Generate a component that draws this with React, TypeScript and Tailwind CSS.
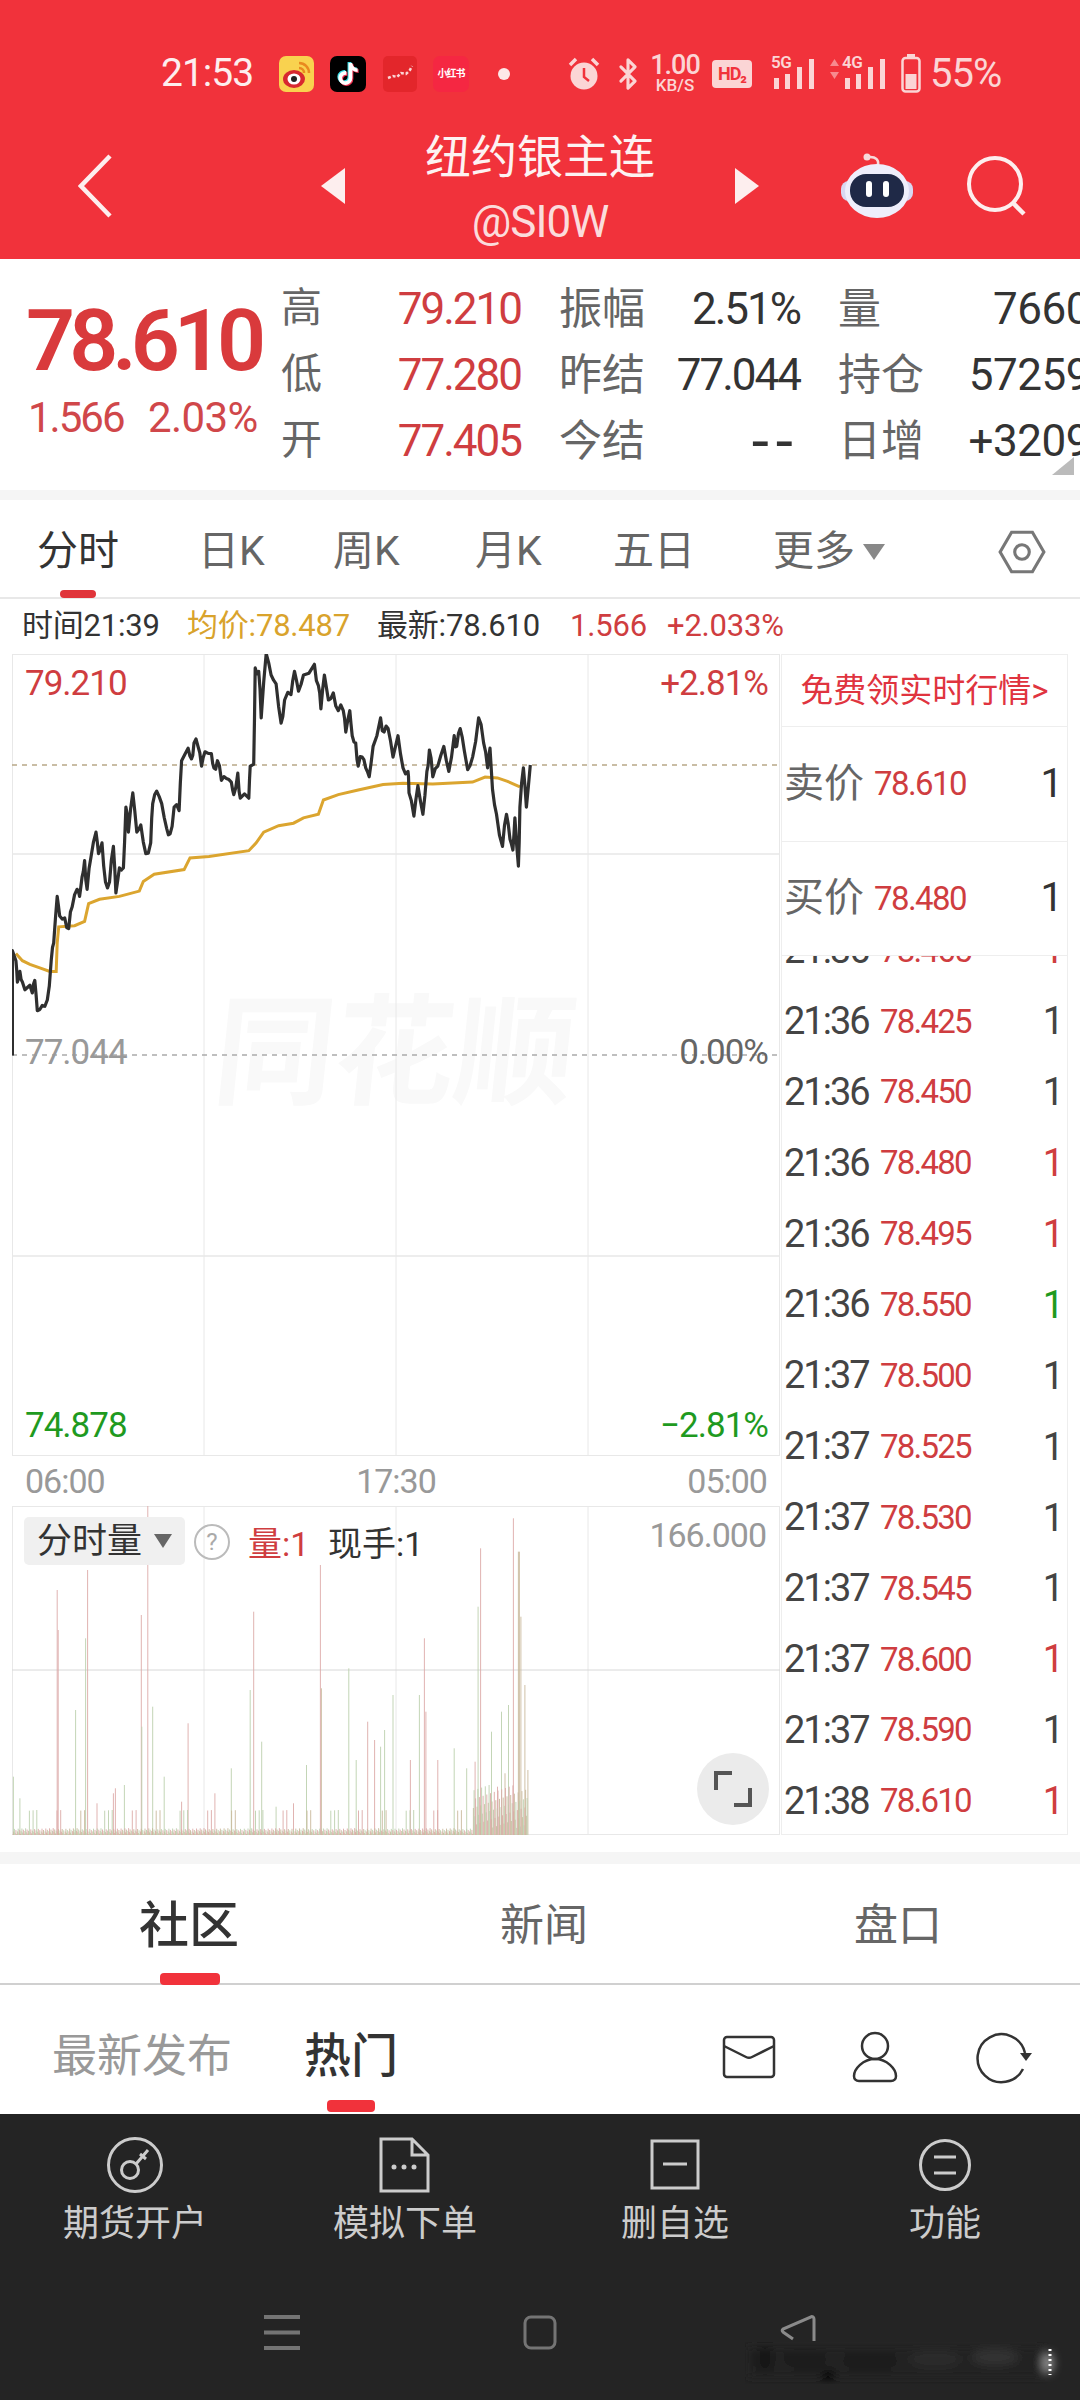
import { Bluetooth } from 'lucide-react';
import { FaTiktok } from 'react-icons/fa6';

const linePts: number[][] = [
  [25,1555],[25,1262],[32,1290],[35,1350],[40,1320],[45,1350],[55,1365],[65,1380],[70,1345],[75,1430],[85,1415],[95,1400],[103,1290],[108,1240],[115,1110],[120,1165],[130,1170],[138,1200],[145,1140],[155,1090],[160,1110],[165,1055],[170,1010],[175,1090],[183,1000],[193,930],[198,990],[205,960],[212,1070],[220,1070],[228,970],[233,1100],[240,1030],[248,1030],[253,860],[258,930],[267,820],[275,930],[283,910],[293,990],[303,960],[307,850],[315,815],[325,850],[335,920],[342,935],[350,860],[360,870],[365,730],[378,695],[385,725],[390,680],[398,690],[405,745],[412,705],[425,710],[430,750],[437,730],[445,785],[455,780],[465,790],[470,825],[478,765],[483,835],[500,835],[503,745],[510,740],[513,470],[520,480],[525,610],[535,430],[545,490],[555,515],[565,625],[572,560],[585,545],[592,480],[600,535],[610,490],[632,460],[640,520],[645,585],[652,490],[660,560],[670,540],[680,590],[690,590],[695,650],[703,590],[708,660],[715,680],[720,745],[728,720],[735,750],[742,775],[750,690],[765,610],[772,650],[780,640],[790,720],[800,660],[810,750],[820,760],[822,820],[832,885],[840,800],[850,880],[858,760],[863,700],[870,775],[880,745],[892,690],[902,760],[913,660],[918,690],[925,640],[933,700],[940,755],[950,720],[962,610],[972,680],[980,750],[985,695],[990,810],[998,880],[1010,970],[1018,880],[1025,950],[1031,980],[1035,890],[1042,1025],[1045,860],[1052,750],[1058,860],[1066,742],
];
const avgPts: number[][] = [
  [32,1270],[45,1290],[60,1300],[80,1310],[100,1320],[113,1320],[115,1240],[118,1195],[150,1192],[170,1180],[178,1130],[200,1118],[240,1110],[280,1095],[288,1068],[310,1048],[370,1035],[382,1002],[420,998],[500,982],[515,960],[530,930],[560,912],[590,905],[610,890],[640,880],[650,840],[680,825],[720,812],[770,797],[810,793],[870,795],[950,790],[975,776],[1000,778],[1020,788],[1045,803],
];
const toChart = (p: number[][]) => p.map(([x, y]) => `${(x / 2.01 - 12).toFixed(1)},${(y / 2.8 - 154).toFixed(1)}`).join(' ');

// the traced points are too smooth, so add a little tick noise between them
const noisyLine = linePts.flatMap(([x, y], i) => {
  const next = linePts[i + 1];
  if (!next || i < 2) return [[x, y]];
  const wob = ((i * 37) % 17) - 8;
  return [[x, y], [(x + next[0]) / 2, (y + next[1]) / 2 + wob * 2]];
});

const RED = '#dcaaa8';
const GREEN = '#bcd0ae';
const TAN = '#c9b99c';
const volBars: [number, number, string][] = [
  [115,450,RED],[117,570,RED],[176,390,RED],[172,595,GREEN],[152,810,GREEN],[284,525,RED],[297,195,RED],[285,860,GREEN],[307,800,GREEN],[378,850,RED],[510,515,RED],[503,750,GREEN],[526,905,GREEN],[644,375,RED],[646,745,TAN],[701,685,GREEN],[739,845,RED],[753,900,RED],[765,920,GREEN],[773,870,GREEN],[790,765,GREEN],[843,765,GREEN],[853,595,RED],[856,815,RED],[913,925,GREEN],[961,500,GREEN],[966,325,RED],[988,875,GREEN],[1008,815,GREEN],[1022,795,GREEN],[1032,235,RED],[1042,335,TAN],[1044,335,TAN],[1047,530,TAN],[1055,735,TAN],[1061,990,TAN],[27,1010,GREEN],[40,1075,GREEN],[465,985,GREEN],[616,975,GREEN],[716,960,GREEN],[825,960,RED],[880,960,RED],[938,985,GREEN],[232,1045,RED],[250,1035,GREEN],[195,1090,RED],[330,1010,GREEN],[432,1060,RED],[555,1100,GREEN],[590,1090,RED],[228,1060,RED],[365,1085,RED],[1015,1000,TAN],[1000,1040,RED],[955,965,RED],
];
// small bars along the floor of the volume chart
for (let i = 0; i < 690; i++) {
  const x = 26 + i * 1.5;
  const r = (i * 7919) % 101;
  const h = x > 950 ? 20 + r * 1.3 : r > 93 ? 40 + r * 0.35 : 2 + r * 0.2;
  volBars.push([x, 1185 - h, r % 3 === 0 ? RED : r % 3 === 1 ? GREEN : TAN]);
}

const statRows = [
  ['高', '79.210', '振幅', '2.51%', '量', '7660'],
  ['低', '77.280', '昨结', '77.044', '持仓', '57259'],
  ['开', '77.405', '今结', '--', '日增', '+3209'],
];

const ticks: [string, string, string][] = [
  ['21:36', '78.425', 'd'],
  ['21:36', '78.450', 'd'],
  ['21:36', '78.480', 'r'],
  ['21:36', '78.495', 'r'],
  ['21:36', '78.550', 'g'],
  ['21:37', '78.500', 'd'],
  ['21:37', '78.525', 'd'],
  ['21:37', '78.530', 'd'],
  ['21:37', '78.545', 'd'],
  ['21:37', '78.600', 'r'],
  ['21:37', '78.590', 'd'],
  ['21:38', '78.610', 'r'],
];

function Signal({ label }: { label: string }) {
  return (
    <div className="relative h-[30px] w-[47px]">
      <span className="absolute left-0 top-[-5px] text-[17px] font-semibold leading-[17px] tracking-[-0.5px] text-[#fbd5d5]">{label}</span>
      <svg width="47" height="30" viewBox="0 0 47 30" className="absolute left-0 top-0">
        <rect x="3" y="19" width="5" height="11" fill="#fbd5d5" />
        <rect x="14" y="15" width="5" height="15" fill="#fbd5d5" />
        <rect x="26" y="8" width="5" height="22" fill="#fbd5d5" />
        <rect x="38" y="0" width="5" height="30" fill="#fbd5d5" />
      </svg>
    </div>
  );
}

function StatusBar() {
  return (
    <div className="mt-[55px] flex h-[37px] items-center pl-[161px]">
      <span className="w-[118px] text-[39px] leading-none tracking-[-1px] text-[#fdeeee]">21:53</span>
      <svg width="35" height="36" viewBox="0 0 35 36">
        <rect width="35" height="36" rx="7" fill="#f9d24f" />
        <ellipse cx="15" cy="23" rx="11" ry="9" fill="#d8282f" />
        <ellipse cx="15" cy="23" rx="6.5" ry="5.5" fill="#fff" />
        <circle cx="15" cy="23" r="3" fill="#222" />
        <path d="M20 7a10 10 0 0 1 10 10M20 12a5 5 0 0 1 5 5" stroke="#e98a20" strokeWidth="2.5" fill="none" />
      </svg>
      <div className="relative ml-[16px] flex h-[36px] w-[36px] items-center justify-center rounded-[7px] bg-black">
        <FaTiktok className="absolute ml-[-2px] mt-[-2px] text-[22px] text-[#3fe0e8]" />
        <FaTiktok className="absolute ml-[2px] mt-[2px] text-[22px] text-[#f0304f]" />
        <FaTiktok className="absolute text-[22px] text-white" />
      </div>
      <svg width="34" height="36" viewBox="0 0 34 36" className="ml-[17px]">
        <rect width="34" height="36" rx="5" fill="#e3262b" />
        <path d="M5 22l5-2 4 1 4-4 5 1 4-4 2-4" stroke="#fbd5d5" strokeWidth="2.5" fill="none" strokeDasharray="3 2" />
      </svg>
      <div className="ml-[16px] flex h-[36px] w-[36px] items-center justify-center rounded-[7px] bg-[#f52742] text-[10px] font-bold tracking-[-1px] text-white">小红书</div>
      <div className="ml-[29px] h-[12px] w-[12px] rounded-full bg-[#fde8e8]" />
      <svg width="32" height="34" viewBox="0 0 32 34" className="ml-[58px]">
        <circle cx="16" cy="19" r="13.5" fill="#fbd5d5" />
        <path d="M16 11v9l5 4" stroke="#f1323b" strokeWidth="2.5" fill="none" />
        <path d="M2 8l6-6M30 8l-6-6" stroke="#fbd5d5" strokeWidth="3.5" />
      </svg>
      <Bluetooth size={34} strokeWidth={2.2} className="ml-[11px] text-[#fbd5d5]" />
      <div className="ml-[4px] flex w-[52px] flex-col items-center text-[#fbd5d5]">
        <span className="text-[27px] font-medium leading-[23px] tracking-[-1px]">1.00</span>
        <span className="text-[17px] font-medium leading-[16px]">KB/S</span>
      </div>
      <div className="ml-[11px] flex h-[28px] w-[40px] items-center justify-center rounded-[4px] bg-[#fbd5d5] text-[18px] font-bold leading-none tracking-[-1px] text-[#f1323b]">HD₂</div>
      <div className="ml-[19px]"><Signal label="5G" /></div>
      <svg width="9" height="20" viewBox="0 0 9 20" className="mb-[10px] ml-[12px]">
        <path d="M4.5 0L9 7H0zM4.5 20L0 13h9z" fill="#f78a8f" />
      </svg>
      <div className="ml-[3px]"><Signal label="4G" /></div>
      <svg width="20" height="39" viewBox="0 0 20 39" className="ml-[12px]">
        <rect x="6" y="0" width="8" height="3" fill="#fbd5d5" />
        <rect x="1.5" y="4" width="17" height="33.5" rx="3" stroke="#fbd5d5" strokeWidth="2.5" fill="none" />
        <rect x="4.5" y="20" width="11" height="15" fill="#fbd5d5" />
      </svg>
      <span className="ml-[9px] text-[40px] leading-none tracking-[-1px] text-[#fbd5d5]">55%</span>
    </div>
  );
}

function TitleRow() {
  return (
    <div className="mt-[35px] flex items-center pl-[78px]">
      <svg width="34" height="64" viewBox="0 0 34 64">
        <path d="M32 2L3 32l29 30" stroke="#fdeeee" strokeWidth="4.5" fill="none" />
      </svg>
      <svg width="24" height="36" viewBox="0 0 24 36" className="ml-[209px]">
        <path d="M24 0v36L0 18z" fill="#fdeeee" />
      </svg>
      <div className="flex w-[390px] flex-col items-center">
        <span className="text-[46px] leading-[60px] text-[#fdf2f2]">纽约银主连</span>
        <span className="mt-[13px] text-[44px] leading-[44px] tracking-[-1px] text-[#fbdcdc]">@SI0W</span>
      </div>
      <svg width="24" height="36" viewBox="0 0 24 36">
        <path d="M0 0v36l24-18z" fill="#fdeeee" />
      </svg>
      <svg width="72" height="66" viewBox="0 0 72 66" className="ml-[82px]">
        <path d="M37 12c1-5-2-8-8-8" stroke="#f7dada" strokeWidth="2.5" fill="none" />
        <circle cx="26" cy="4" r="3.5" fill="#f7dada" />
        <rect x="0" y="28" width="72" height="20" rx="8" fill="#d8d8f2" />
        <ellipse cx="36" cy="38" rx="32" ry="27" fill="#eeeefb" />
        <rect x="9" y="21" width="54" height="33" rx="16" fill="#1f2947" />
        <rect x="25" y="28" width="6" height="16" rx="3" fill="#fff" />
        <rect x="42" y="28" width="6" height="16" rx="3" fill="#fff" />
      </svg>
      <svg width="60" height="60" viewBox="0 0 60 60" className="ml-[53px]">
        <circle cx="29" cy="28" r="26" stroke="#fdeeee" strokeWidth="4" fill="none" />
        <path d="M47 47l11 11" stroke="#fdeeee" strokeWidth="4.5" />
      </svg>
    </div>
  );
}

function Quote() {
  return (
    <div className="relative flex h-[231px] overflow-hidden">
      <div className="w-[281px] shrink-0 pl-[26px] pt-[40px]">
        <div className="text-[86px] font-semibold leading-[84px] tracking-[-6px] text-[#d93a3c]">78.610</div>
        <div className="mt-[15px] flex text-[42px] leading-[40px] tracking-[-2px] text-[#d0474a]">
          <span className="w-[122px] pl-[2px]">1.566</span>
          <span className="tracking-[-0.6px]">2.03%</span>
        </div>
      </div>
      <div className="pt-[17px]">
        {statRows.map(([a, b, c, d, e, f]) => (
          <div key={a} className="flex h-[66px] items-center">
            <div className="flex w-[240px] items-center justify-between">
              <span className="text-[41px] text-[#666]">{a}</span>
              <span className="text-[44px] tracking-[-2px] text-[#cf3d40]">{b}</span>
            </div>
            <div className="ml-[38px] flex w-[241px] items-center justify-between">
              <span className="text-[43px] text-[#666]">{c}</span>
              {d === '--' ? (
                <span className="text-[62px] leading-[44px] tracking-[7px] text-[#333]">{d}</span>
              ) : (
                <span className="text-[44px] tracking-[-2px] text-[#333]">{d}</span>
              )}
            </div>
            <div className="ml-[38px] flex w-[252px] items-center justify-between">
              <span className="text-[43px] text-[#666]">{e}</span>
              <span className="text-[44px] tracking-[-0.5px] text-[#333]">{f}</span>
            </div>
          </div>
        ))}
      </div>
      <svg width="22" height="18" viewBox="0 0 22 18" className="absolute bottom-[15px] right-[6px]">
        <path d="M22 0v18H0z" fill="#bbb" />
      </svg>
    </div>
  );
}

function ChartTabs() {
  return (
    <div className="relative grid h-[99px] grid-cols-[161px_135px_142px_138px_160px_200px_1fr] items-center border-b-2 border-[#e8e8e8] pl-[37px] pt-[6px] text-[41px] text-[#666]">
      <span className="text-[#333]">分时</span>
      <span>日K</span>
      <span>周K</span>
      <span>月K</span>
      <span>五日</span>
      <span className="flex items-center">
        更多
        <svg width="22" height="16" viewBox="0 0 22 16" className="ml-[8px]">
          <path d="M0 0h22L11 16z" fill="#888" />
        </svg>
      </span>
      <svg width="50" height="50" viewBox="0 0 48 48" className="ml-[24px] justify-self-start">
        <path d="M14 5h20l11 19-11 19H14L3 24z" stroke="#777" strokeWidth="3" fill="none" />
        <circle cx="24" cy="24" r="7" stroke="#777" strokeWidth="3" fill="none" />
      </svg>
      <div className="absolute bottom-[-1px] left-[60px] h-[8px] w-[36px] rounded-full bg-[#e0343a]" />
    </div>
  );
}

function InfoRow() {
  return (
    <div className="grid h-[55px] grid-cols-[165px_190px_193px_97px_1fr] items-center pl-[22px] text-[31px] tracking-[-0.2px] text-[#333]">
      <span>时间21:39</span>
      <span className="text-[#d9a32c]">均价:78.487</span>
      <span>最新:78.610</span>
      <span className="text-[#cf3d40]">1.566</span>
      <span className="text-[#cf3d40]">+2.033%</span>
    </div>
  );
}

function PriceChart() {
  return (
    <div className="relative h-[802px] w-[768px]">
      <span className="absolute left-[203px] top-[335px] -skew-x-6 text-[120px] font-bold leading-[130px] text-[#f9f9f9]">同花顺</span>
      <svg width="768" height="802" viewBox="0 0 768 802" className="absolute left-0 top-0">
        <rect x="0.5" y="0.5" width="767" height="801" fill="none" stroke="#e8e8e8" />
        {[192, 384, 576].map((x) => (
          <path key={x} d={`M${x} 0v802`} stroke="#e8e8e8" strokeWidth="1" />
        ))}
        <path d="M0 200h768M0 602h768" stroke="#e8e8e8" strokeWidth="1.5" />
        <path d="M0 111h768" stroke="#b8a888" strokeWidth="1.5" strokeDasharray="5 5" />
        <path d="M0 401h768" stroke="#aaa" strokeWidth="1.5" strokeDasharray="5 5" />
        <polyline points={toChart(avgPts)} fill="none" stroke="#dba52f" strokeWidth="3" />
        <polyline points={toChart(noisyLine)} fill="none" stroke="#2f2f2f" strokeWidth="3.2" strokeLinejoin="round" />
      </svg>
      <span className="absolute left-[13px] top-[10px] text-[35px] leading-[40px] tracking-[-1px] text-[#cf3d40]">79.210</span>
      <span className="absolute right-[12px] top-[10px] text-[35px] leading-[40px] tracking-[-1px] text-[#cf3d40]">+2.81%</span>
      <span className="absolute left-[13px] top-[379px] text-[35px] leading-[40px] tracking-[-1px] text-[#999]">77.044</span>
      <span className="absolute right-[12px] top-[379px] text-[35px] leading-[40px] tracking-[-1px] text-[#666]">0.00%</span>
      <span className="absolute left-[13px] top-[752px] text-[35px] leading-[40px] tracking-[-1px] text-[#1f9a1f]">74.878</span>
      <span className="absolute right-[12px] top-[752px] text-[35px] leading-[40px] tracking-[-1px] text-[#1f9a1f]">−2.81%</span>
    </div>
  );
}

function VolumeChart() {
  return (
    <div className="relative h-[329px] w-[768px]">
      <svg width="768" height="329" viewBox="0 0 768 329" className="absolute left-0 top-0">
        <rect x="0.5" y="0.5" width="767" height="328" fill="none" stroke="#e8e8e8" />
        {[192, 384, 576].map((x) => (
          <path key={x} d={`M${x} 0v329`} stroke="#e8e8e8" strokeWidth="1" />
        ))}
        <path d="M0 164h768" stroke="#d8d8d8" strokeWidth="1" />
        {volBars.map(([x, top, c], i) => (
          <path key={i} d={`M${(x / 2.01 - 12).toFixed(1)} ${(top / 3 - 66).toFixed(1)}V329`} stroke={c} strokeWidth="0.9" />
        ))}
      </svg>
      <div className="absolute left-[12px] top-[11px] flex h-[48px] w-[161px] items-center rounded-[5px] bg-[#f0f0f0] pl-[13px] text-[35px] leading-none text-[#333]">
        分时量
        <svg width="18" height="14" viewBox="0 0 18 14" className="ml-[12px]">
          <path d="M0 0h18L9 14z" fill="#666" />
        </svg>
      </div>
      <div className="absolute left-[182px] top-[18px] flex h-[36px] w-[36px] items-center justify-center rounded-full border-2 border-[#bbb] text-[24px] leading-none text-[#aaa]">?</div>
      <span className="absolute left-[236px] top-[17px] text-[34px] leading-[42px] text-[#cf3d40]">量:1</span>
      <span className="absolute left-[316px] top-[17px] text-[34px] leading-[42px] text-[#333]">现手:1</span>
      <span className="absolute right-[14px] top-[8px] text-[34px] leading-[42px] tracking-[-1px] text-[#999]">166.000</span>
      <div className="absolute left-[685px] top-[247px] flex h-[72px] w-[72px] items-center justify-center rounded-full bg-[#ebebeb]">
        <svg width="38" height="38" viewBox="0 0 38 38">
          <path d="M2 20V3h16M36 18v17H20" stroke="#555" strokeWidth="4" fill="none" />
        </svg>
      </div>
    </div>
  );
}

function TickRow({ time, price, kind }: { time: string; price: string; kind: string }) {
  return (
    <div className="flex h-[70.9px] items-center pl-[2px] pr-[3px]">
      <span className="w-[96px] text-[38px] tracking-[-2px] text-[#444]">{time}</span>
      <span className="text-[33px] tracking-[-1.8px] text-[#cf3d40]">{price}</span>
      <span className={`ml-auto text-[38px] leading-none ${kind === 'r' ? 'text-[#cf3d40]' : kind === 'g' ? 'text-[#1f9a1f]' : 'text-[#444]'}`}>1</span>
    </div>
  );
}

function SidePanel() {
  return (
    <div className="ml-px flex h-[1181px] w-[287px] flex-col border-x border-b border-[#eee]">
      <div className="flex h-[73px] items-center justify-center border-y border-[#eee] text-[33px] leading-none text-[#e0343f]">免费领实时行情&gt;</div>
      {[['卖价', '78.610'], ['买价', '78.480']].map(([l, p]) => (
        <div key={l} className="flex h-[114.5px] items-center border-b border-[#eee] px-[2px]">
          <span className="w-[90px] text-[40px] text-[#666]">{l}</span>
          <span className="text-[33px] tracking-[-1.6px] text-[#cf3d40]">{p}</span>
          <span className="ml-auto pr-[2px] text-[40px] leading-none text-[#333]">1</span>
        </div>
      ))}
      <div className="min-h-0 flex-1 overflow-hidden">
        <div className="mt-[-41px]">
          <TickRow time="21:36" price="78.465" kind="r" />
          {ticks.map(([t, p, k], i) => (
            <TickRow key={i} time={t} price={p} kind={k} />
          ))}
        </div>
      </div>
    </div>
  );
}

function Community() {
  return (
    <>
      <div className="mt-[17px] h-[12px] bg-[#f5f5f5]" />
      <div className="relative flex h-[121px] items-center border-b-2 border-[#d0d0d0] px-[12px] pt-[5px]">
        <span className="w-[355px] pl-[2px] text-center text-[50px] font-medium text-[#333]">社区</span>
        <span className="w-[355px] pl-[8px] text-center text-[44px] text-[#666]">新闻</span>
        <span className="w-[355px] pl-[12px] text-center text-[44px] text-[#666]">盘口</span>
        <div className="absolute bottom-[-2px] left-[160px] h-[12px] w-[60px] rounded-[4px] bg-[#f1323b]" />
      </div>
      <div className="relative flex h-[129px] items-center pl-[52px] pt-[14px]">
        <span className="text-[45px] text-[#999]">最新发布</span>
        <span className="ml-[72px] text-[47px] font-medium text-[#333]">热门</span>
        <svg width="54" height="44" viewBox="0 0 54 44" className="ml-[324px]">
          <rect x="2" y="2" width="50" height="40" rx="3" stroke="#333" strokeWidth="2.5" fill="none" />
          <path d="M2 11l22 11c2 1 4 1 6 0l22-11" stroke="#333" strokeWidth="2.5" fill="none" />
        </svg>
        <svg width="48" height="52" viewBox="0 0 48 52" className="ml-[75px]">
          <circle cx="24" cy="15" r="13" stroke="#333" strokeWidth="2.5" fill="none" />
          <path d="M24 28C12 28 3 38 3 45c0 3 2 5 5 5h32c3 0 5-2 5-5 0-7-9-17-21-17z" stroke="#333" strokeWidth="2.5" fill="none" />
        </svg>
        <svg width="60" height="56" viewBox="0 0 60 56" className="ml-[75px]">
          <path d="M51 24A24 24 0 1 0 49 40" stroke="#333" strokeWidth="2.5" fill="none" />
          <path d="M46 24h12l-6 8z" fill="#333" />
        </svg>
        <div className="absolute bottom-[2px] left-[327px] h-[12px] w-[48px] rounded-[4px] bg-[#f1323b]" />
      </div>
    </>
  );
}

function BottomBar() {
  const items = [
    {
      label: '期货开户',
      icon: (
        <>
          <circle cx="28" cy="28" r="26.5" />
          <circle cx="23" cy="33" r="8.5" />
          <path d="M29 27l12-14M33 17l6 5" />
        </>
      ),
    },
    {
      label: '模拟下单',
      icon: (
        <>
          <path d="M4 2h31l16 16v36H4zM35 2v16h16" />
          <circle cx="17" cy="30" r="2.5" fill="#ccc" stroke="none" />
          <circle cx="27" cy="30" r="2.5" fill="#ccc" stroke="none" />
          <circle cx="37" cy="30" r="2.5" fill="#ccc" stroke="none" />
        </>
      ),
    },
    {
      label: '删自选',
      icon: (
        <>
          <rect x="5" y="4" width="46" height="47" />
          <path d="M16 27h24" />
        </>
      ),
    },
    {
      label: '功能',
      icon: (
        <>
          <circle cx="28" cy="28" r="24.5" />
          <path d="M17 20h22M17 36h22" />
        </>
      ),
    },
  ];
  return (
    <div className="relative flex-1 bg-[#242424]">
      <div className="grid grid-cols-4 pt-[23px]">
        {items.map((it) => (
          <div key={it.label} className="flex flex-col items-center">
            <svg width="56" height="56" viewBox="0 0 56 56" fill="none" stroke="#ccc" strokeWidth="3">
              {it.icon}
            </svg>
            <span className="mt-[6px] text-[36px] leading-[50px] text-[#ccc]">{it.label}</span>
          </div>
        ))}
      </div>
      <div className="mt-[66px] flex items-start pl-[264px]">
        <svg width="36" height="35" viewBox="0 0 36 35" stroke="#747474" strokeWidth="4">
          <path d="M0 2h36M0 17.5h36M0 33h36" />
        </svg>
        <svg width="34" height="35" viewBox="0 0 34 35" className="ml-[223px]">
          <rect x="2" y="2" width="30" height="31" rx="6" stroke="#747474" strokeWidth="3" fill="none" />
        </svg>
        <svg width="36" height="28" viewBox="0 0 36 28" className="ml-[223px]">
          <path d="M13 24L3 17c-1-1-1-2 0-3L31 2c1-1 3 0 3 2v22" stroke="#8a8a8a" strokeWidth="3" fill="none" />
        </svg>
      </div>
      <svg width="320" height="48" viewBox="0 0 320 48" className="absolute left-[745px] top-[225px]">
        <defs>
          <filter id="smudge"><feGaussianBlur stdDeviation="4" /></filter>
        </defs>
        <g filter="url(#smudge)">
          <rect x="2" y="8" width="295" height="30" fill="#242424" />
          <ellipse cx="20" cy="20" rx="8" ry="13" fill="#141414" />
          <ellipse cx="83" cy="36" rx="7" ry="5" fill="#000" />
          <ellipse cx="60" cy="20" rx="22" ry="10" fill="#1d1d1d" />
          <ellipse cx="125" cy="22" rx="28" ry="10" fill="#1b1b1b" />
          <ellipse cx="190" cy="20" rx="26" ry="9" fill="#2c2c2c" />
          <ellipse cx="250" cy="18" rx="24" ry="9" fill="#333" />
          <ellipse cx="303" cy="24" rx="6" ry="11" fill="#888" />
        </g>
        <path d="M305 10v26" stroke="#fff" strokeWidth="3" strokeDasharray="2 3" />
      </svg>
    </div>
  );
}

export default function App() {
  return (
    <div className="flex h-[2400px] w-[1080px] flex-col overflow-hidden bg-white font-['Roboto','Noto_Sans_CJK_SC',sans-serif]">
      <div className="h-[259px] bg-[#f1323b]">
        <StatusBar />
        <TitleRow />
      </div>
      <Quote />
      <div className="h-[10px] bg-[#f5f5f5]" />
      <ChartTabs />
      <InfoRow />
      <div className="flex pl-[12px]">
        <div className="flex flex-col">
          <PriceChart />
          <div className="flex h-[50px] items-center justify-between px-[13px] text-[34px] tracking-[-1px] text-[#999]">
            <span>06:00</span>
            <span>17:30</span>
            <span>05:00</span>
          </div>
          <VolumeChart />
        </div>
        <SidePanel />
      </div>
      <Community />
      <BottomBar />
    </div>
  );
}
